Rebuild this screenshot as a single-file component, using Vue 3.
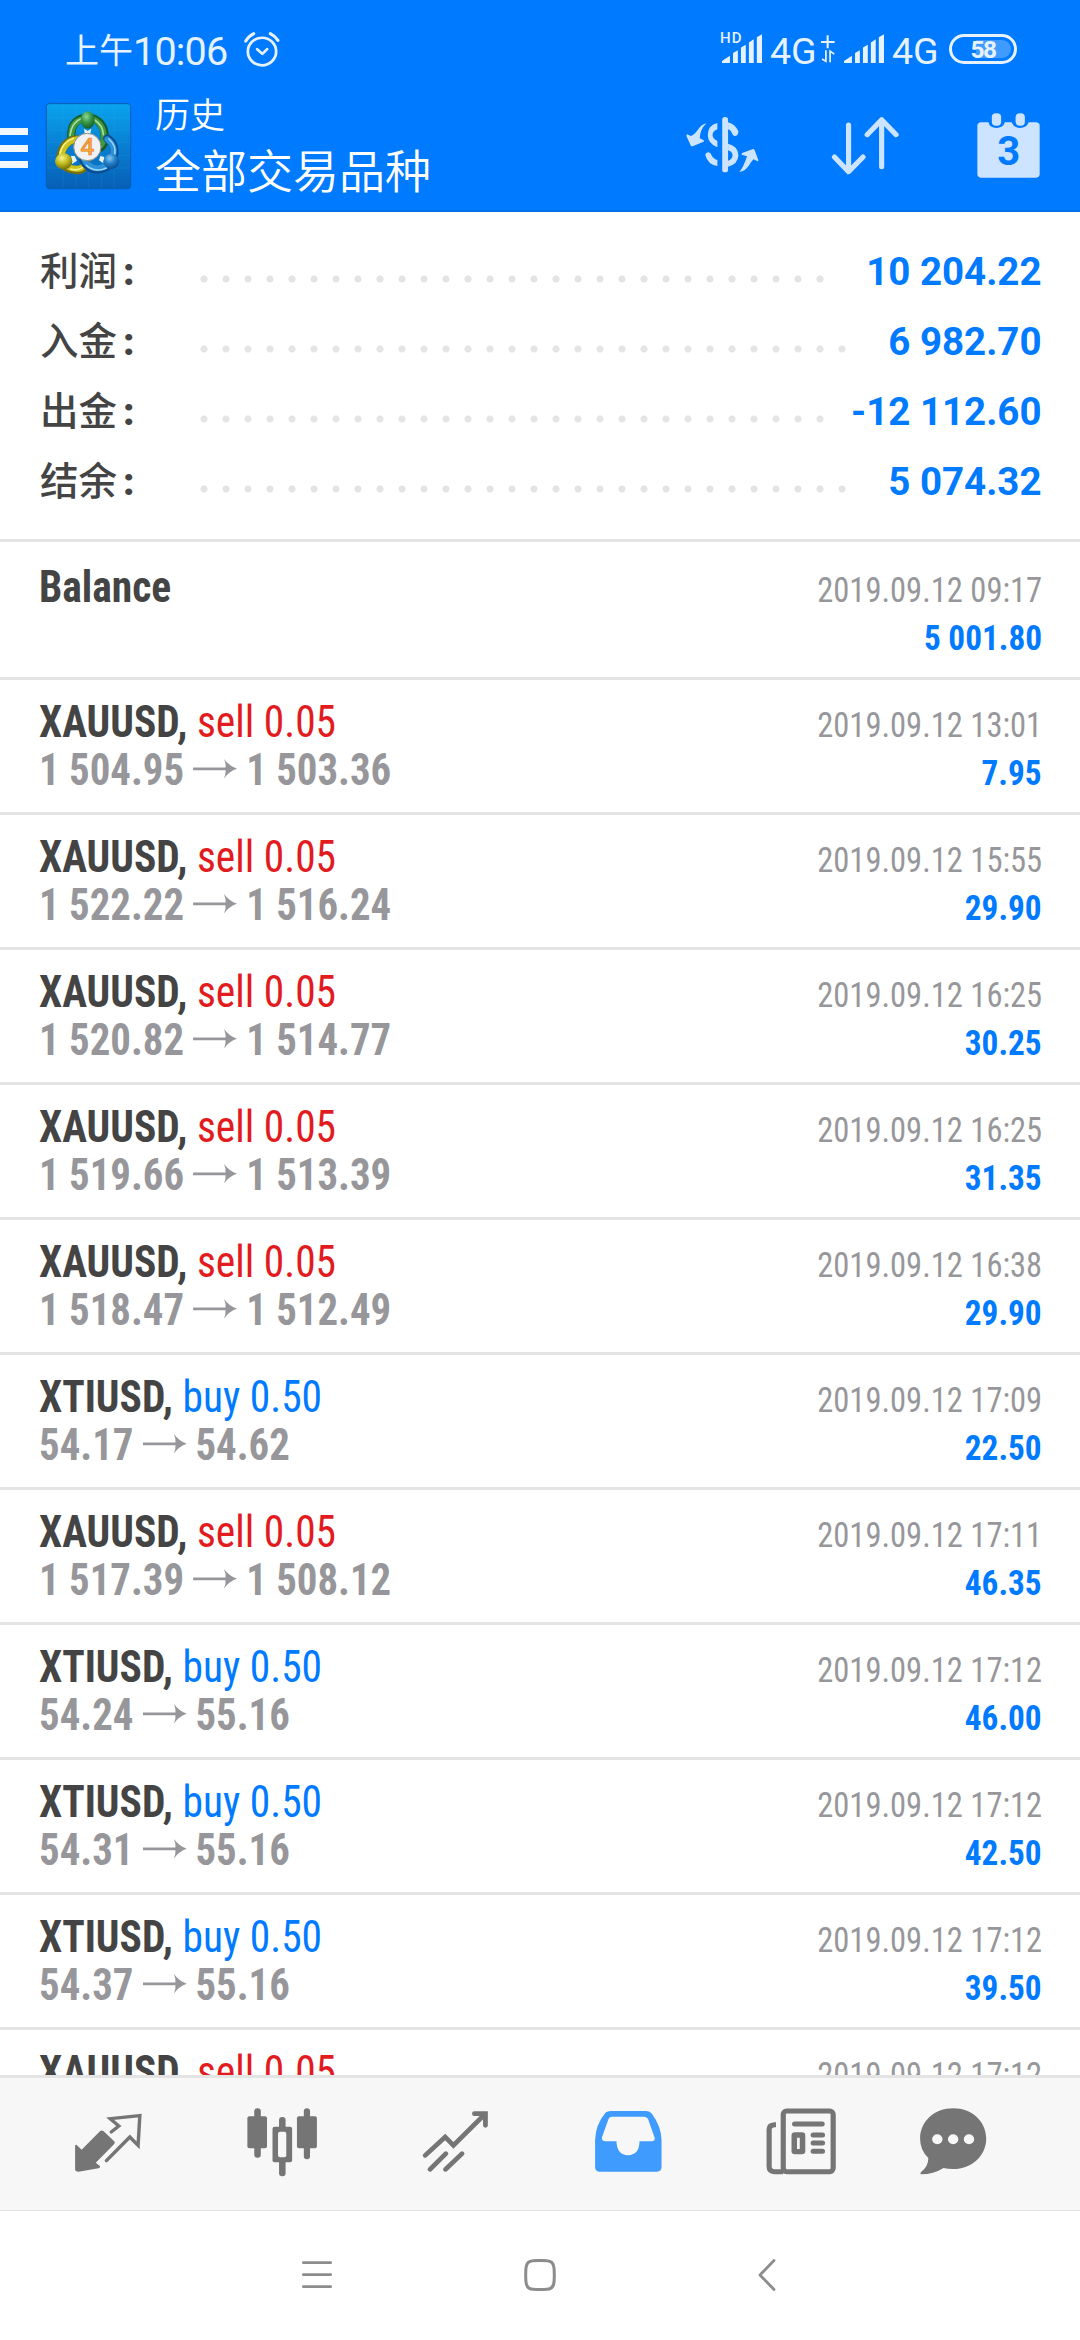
<script setup>
const summary = [
  { label: '利润', value: '10 204.22', dots: 29 },
  { label: '入金', value: '6 982.70', dots: 30 },
  { label: '出金', value: '-12 112.60', dots: 29 },
  { label: '结余', value: '5 074.32', dots: 30 },
]
const deals = [
  { symbol: 'Balance', time: '2019.09.12 09:17', profit: '5 001.80' },
  { symbol: 'XAUUSD,', side: 'sell', volume: '0.05', open: '1 504.95', close: '1 503.36', time: '2019.09.12 13:01', profit: '7.95' },
  { symbol: 'XAUUSD,', side: 'sell', volume: '0.05', open: '1 522.22', close: '1 516.24', time: '2019.09.12 15:55', profit: '29.90' },
  { symbol: 'XAUUSD,', side: 'sell', volume: '0.05', open: '1 520.82', close: '1 514.77', time: '2019.09.12 16:25', profit: '30.25' },
  { symbol: 'XAUUSD,', side: 'sell', volume: '0.05', open: '1 519.66', close: '1 513.39', time: '2019.09.12 16:25', profit: '31.35' },
  { symbol: 'XAUUSD,', side: 'sell', volume: '0.05', open: '1 518.47', close: '1 512.49', time: '2019.09.12 16:38', profit: '29.90' },
  { symbol: 'XTIUSD,', side: 'buy', volume: '0.50', open: '54.17', close: '54.62', time: '2019.09.12 17:09', profit: '22.50' },
  { symbol: 'XAUUSD,', side: 'sell', volume: '0.05', open: '1 517.39', close: '1 508.12', time: '2019.09.12 17:11', profit: '46.35' },
  { symbol: 'XTIUSD,', side: 'buy', volume: '0.50', open: '54.24', close: '55.16', time: '2019.09.12 17:12', profit: '46.00' },
  { symbol: 'XTIUSD,', side: 'buy', volume: '0.50', open: '54.31', close: '55.16', time: '2019.09.12 17:12', profit: '42.50' },
  { symbol: 'XTIUSD,', side: 'buy', volume: '0.50', open: '54.37', close: '55.16', time: '2019.09.12 17:12', profit: '39.50' },
  { symbol: 'XAUUSD,', side: 'sell', volume: '0.05', time: '2019.09.12 17:12' },
]
</script>

<template>
  <div class="screen">
    <header class="top">
      <div class="status">
        <div class="clock"><span class="ampm">上午</span><span class="time">10:06</span>
          <svg class="alarm" viewBox="705 95 110 110" preserveAspectRatio="none" fill="none" stroke="#e6f2ff">
            <circle cx="760" cy="156" r="41" stroke-width="8" />
            <path d="M746 149L761 163L775 149" stroke-width="8" stroke-linecap="round" stroke-linejoin="round" />
            <path d="M713 125Q722 110 736 103M784 103Q798 110 806 123" stroke-width="9" stroke-linecap="round" />
          </svg>
        </div>
        <div class="signals">
          <div class="signal">
            <span class="hd">HD</span>
            <svg class="bars" viewBox="523 95 116 100" preserveAspectRatio="none" fill="#e6f2ff">
              <path d="M523 189V183L546 167V189ZM555 189V159L569 150V189ZM578 189V142L592 134V189ZM601 189V127L615 117V189ZM624 189V111L639 102V189Z" />
            </svg>
          </div>
          <span class="net">4G</span>
          <svg class="plus" viewBox="812 95 40 100" preserveAspectRatio="none" fill="none" stroke="#e6f2ff" stroke-width="6">
            <path d="M831 105V144M812 125H851" />
            <path d="M826 150V184L815 177M838 187V153L850 162" stroke-width="5" />
          </svg>
          <svg class="bars second" viewBox="523 95 116 100" preserveAspectRatio="none" fill="#e6f2ff">
            <path d="M523 189V183L546 167V189ZM555 189V159L569 150V189ZM578 189V142L592 134V189ZM601 189V127L615 117V189ZM624 189V111L639 102V189Z" />
          </svg>
          <span class="net">4G</span>
          <div class="battery"><span>58</span></div>
        </div>
      </div>
      <div class="toolbar">
        <div class="burger"><i></i><i></i><i></i></div>
        <svg class="logo" viewBox="0 0 300 285">
          <defs>
            <linearGradient id="sky" x1="0" y1="0" x2="0" y2="1"><stop offset="0" stop-color="#0aa3ee" /><stop offset=".5" stop-color="#087fd2" /><stop offset="1" stop-color="#075fb5" /></linearGradient>
            <radialGradient id="grn" cx=".4" cy=".3" r=".7"><stop offset="0" stop-color="#8ed69a" /><stop offset=".5" stop-color="#389a48" /><stop offset="1" stop-color="#145f2d" /></radialGradient>
            <radialGradient id="yel" cx=".4" cy=".3" r=".7"><stop offset="0" stop-color="#f7f38a" /><stop offset=".5" stop-color="#c3bd20" /><stop offset="1" stop-color="#77720c" /></radialGradient>
            <radialGradient id="blu" cx=".4" cy=".3" r=".7"><stop offset="0" stop-color="#85c9f2" /><stop offset=".5" stop-color="#227fc8" /><stop offset="1" stop-color="#0b4f91" /></radialGradient>
          </defs>
          <rect x="19" y="17" width="253" height="255" rx="9" fill="url(#sky)" stroke="#0b5cb3" stroke-width="3" />
          <path d="M69 19V270M108 19V270M146 19V270M184 19V270M222 19V270M21 58H270M21 96H270M21 134H270M21 172H270M21 210H270" stroke="#4ab8f0" stroke-opacity=".18" stroke-width="2" />
          <g fill="none" stroke-linecap="round">
            <path d="M94 122C90 72 118 60 143 59C174 60 196 84 194 122C193 138 184 148 174 152" stroke="#175b29" stroke-width="25" />
            <path d="M94 120C91 74 119 63 143 61C173 62 193 86 191 122C190 134 183 142 175 147" stroke="#3d9942" stroke-width="18" />
            <path d="M90 112C94 80 110 66 128 60M164 66C180 76 189 90 190 110" stroke="#a8dda3" stroke-width="5" />
            <path d="M112 124C82 124 62 150 62 178C64 206 92 219 116 216C130 214 139 203 140 190" stroke="#766f10" stroke-width="25" />
            <path d="M112 124C84 126 65 150 65 178C67 202 92 215 116 212C128 210 136 201 137 190" stroke="#cbc31e" stroke-width="18" />
            <path d="M100 121C76 130 63 147 59 170M92 213C104 217 118 215 127 209" stroke="#f5ef86" stroke-width="5" />
            <path d="M202 122C222 134 229 158 218 184C204 216 168 222 146 206C136 199 132 191 129 183" stroke="#0b4d92" stroke-width="25" />
            <path d="M202 124C220 137 226 158 215 184C202 211 168 218 148 202C139 196 135 190 132 183" stroke="#2b91d8" stroke-width="18" />
            <path d="M207 123C222 137 228 152 224 169M139 202C158 219 183 219 199 210" stroke="#95d5fa" stroke-width="5" />
          </g>
          <path d="M132 92L143 99L154 92L150 110H135ZM93 174L104 174L111 188L96 198ZM181 174L193 177L190 196L177 187Z" fill="#e9f3f0" />
          <ellipse cx="143" cy="66" rx="21" ry="26" fill="url(#grn)" />
          <ellipse cx="71" cy="190" rx="26" ry="24" fill="url(#yel)" />
          <ellipse cx="214" cy="190" rx="24" ry="23" fill="url(#blu)" />
          <circle cx="142" cy="147" r="41" fill="#f1f1f3" stroke="#8a8f86" stroke-width="3" />
          <text x="142" y="171" text-anchor="middle" font-family="'Open Sans', sans-serif" font-weight="600" font-size="70" fill="#ffa537" stroke="#d98238" stroke-width="2">4</text>
        </svg>
        <div class="titles">
          <div class="sub">历史</div>
          <div class="title">全部交易品种</div>
        </div>
        <div class="actions">
          <svg class="act money" viewBox="420 335 220 200" preserveAspectRatio="none" fill="#cce4ff">
            <rect x="528" y="350" width="17" height="166" rx="8" />
            <path d="M514 368V387Q500 391 500 405Q501 416 514 422V441Q486 429 486 403Q487 374 514 368ZM545 366Q565 371 575 393Q575 407 564 407Q561 407 557 400Q552 388 545 387ZM479 464Q480 456 488 456Q496 457 497 465Q501 475 514 479V497Q486 493 479 464ZM545 430Q575 438 575 465Q574 492 545 499V481Q558 477 558 465Q557 453 545 450Z" />
            <path d="M482 369Q465 374 457 389Q446 404 437 407L426 402Q423 404 425 409L437 436Q439 439 444 437L474 424Q477 421 473 419L463 414Q463 388 482 369Z" />
            <path d="M578 515Q590 500 600 468L585 463Q582 461 586 458L617 446Q620 445 622 449L633 480Q632 484 629 482L619 477Q612 484 605 496Q595 512 578 515Z" />
          </svg>
          <svg class="act sort" viewBox="845 335 200 200" preserveAspectRatio="none" fill="none" stroke="#cce4ff" stroke-width="15" stroke-linecap="round" stroke-linejoin="round">
            <path d="M896 374V511M855 470L896 514L938 470M992 499V362M950 403L992 358L1034 403" />
          </svg>
          <div class="act calendar">
            <svg viewBox="1265 335 190 200" preserveAspectRatio="none" fill="#cce4ff">
              <path d="M1278 366H1301Q1305 383 1324 383Q1344 383 1349 366H1369Q1374 383 1393 383Q1412 383 1418 366H1441Q1450 368 1450 376V522Q1449 532 1440 532H1279Q1269 531 1269 521V376Q1269 368 1278 366Z" />
              <rect x="1311" y="339" width="27" height="37" rx="12" /><rect x="1380" y="339" width="27" height="37" rx="12" />
            </svg>
            <span>3</span>
          </div>
        </div>
      </div>
    </header>

    <section class="summary">
      <div v-for="s in summary" :key="s.label" class="sum-row">
        <div class="label">{{ s.label }}<b>:</b></div>
        <div class="dots" :style="{ width: s.dots * 22 + 'px' }"></div>
        <div class="amount">{{ s.value }}</div>
      </div>
    </section>

    <main class="list">
      <article v-for="(d, i) in deals" :key="i" class="deal" :class="{ first: i === 0 }">
        <div class="line">
          <div class="name"><span class="sym">{{ d.symbol }}</span><span v-if="d.side" class="side" :class="d.side">&nbsp;{{ d.side }} {{ d.volume }}</span></div>
          <div class="date">{{ d.time }}</div>
        </div>
        <div v-if="d.profit" class="line">
          <div class="prices">
            <template v-if="d.open">
              <span>{{ d.open }}</span>
              <svg class="arrow" viewBox="0 0 44 20" preserveAspectRatio="none" fill="#97979b"><path d="M0 8.600H32.500Q33 5 31 0Q36 7 44 9.800Q36 12.500 31 19.500Q33 14.500 32.500 11.200H0Z" /></svg>
              <span>{{ d.close }}</span>
            </template>
          </div>
          <div class="profit">{{ d.profit }}</div>
        </div>
      </article>
    </main>

    <nav class="tabs">
      <div class="tab">
        <svg viewBox="210 260 210 210" preserveAspectRatio="none" fill="#757575">
          <path d="M219 376Q221 371 226 376L238 388L291 333Q297 328 302 333L334 364Q335 368 332 372L279 427L291 437Q293 442 287 444L229 454Q219 454 219 447Z" />
          <path d="M324 335L346 317L321 295L407 286L402 375L378 350L310 421" fill="none" stroke="#757575" stroke-width="10" stroke-linecap="round" />
        </svg>
      </div>
      <div class="tab">
        <svg viewBox="711 260 210 210" preserveAspectRatio="none" fill="#757575">
          <rect x="715" y="288" width="57" height="96" rx="6" /><rect x="735" y="264" width="19" height="148" rx="9" />
          <rect x="859" y="288" width="58" height="96" rx="6" /><rect x="879" y="264" width="18" height="153" rx="9" />
          <rect x="807" y="290" width="19" height="178" rx="9" /><rect x="788" y="319" width="57" height="107" rx="6" />
          <rect x="804" y="334" width="24" height="77" rx="6" fill="#f7f7f7" />
        </svg>
      </div>
      <div class="tab">
        <svg viewBox="1213 260 210 210" preserveAspectRatio="none" fill="none" stroke="#757575" stroke-width="14" stroke-linecap="round">
          <path d="M1231 405L1289 350L1313 375L1403 283M1374 280H1406V315M1245 447L1291 400M1290 447L1338 400" />
        </svg>
      </div>
      <div class="tab">
        <svg viewBox="149 260 210 210" preserveAspectRatio="none" fill="#409bff">
          <path fill-rule="evenodd" d="M204 272H307Q318 272 323 280Q350 318 351 358V441Q350 454 338 454H170Q158 453 158 441V358Q160 312 186 280Q191 272 204 272ZM207 289Q200 289 197 296L178 351Q176 362 188 363H220Q221 404 254 405Q287 403 287 363H322Q333 362 331 352L312 297Q309 289 299 289Z" />
        </svg>
      </div>
      <div class="tab">
        <svg viewBox="653 260 210 210" preserveAspectRatio="none" fill="none" stroke="#757575" stroke-width="15">
          <rect x="706" y="272" width="145" height="182" rx="10" />
          <path d="M685 313H680Q665 314 665 327V438Q665 454 680 454H706" />
          <path d="M739 311H819M793 344H820M793 368H820M793 393H820" stroke-linecap="round" />
          <rect x="738" y="344" width="24" height="50" rx="2" stroke-width="16" />
        </svg>
      </div>
      <div class="tab last">
        <svg viewBox="1094 260 210 210" preserveAspectRatio="none" fill="#757575">
          <path d="M1199 264C1254 264 1295 304 1295 355C1295 406 1253 446 1199 446Q1184 446 1171 443Q1142 462 1106 462Q1101 459 1106 455Q1127 438 1127 413Q1103 389 1103 355C1103 304 1144 264 1199 264Z" />
          <g fill="#f7f7f7"><circle cx="1153" cy="357" r="15" /><circle cx="1199" cy="357" r="15" /><circle cx="1245" cy="357" r="15" /></g>
        </svg>
      </div>
    </nav>

    <footer class="sysnav">
      <svg class="k-menu" viewBox="0 0 30 32" fill="none" stroke="#8c8c8c" stroke-width="2.8" stroke-linecap="round"><path d="M1.4 3.7H28.6M1.4 15.7H28.6M1.4 27.7H28.6" /></svg>
      <svg class="k-home" viewBox="0 0 32 32" fill="none" stroke="#8c8c8c" stroke-width="3"><path d="M9 1.7Q16 1.2 23 1.7Q29.5 2 30 9Q30.6 16 30 23Q29.5 30 23 30.3Q16 30.8 9 30.3Q2.5 30 2 23Q1.4 16 2 9Q2.5 2 9 1.7Z" /></svg>
      <svg class="k-back" viewBox="0 0 18 32" fill="none" stroke="#8c8c8c" stroke-width="2.8" stroke-linecap="round" stroke-linejoin="round"><path d="M16 1.5L2 16L16 30.5" /></svg>
    </footer>
  </div>
</template>

<style>
body {
  background: #fff;
}
</style>

<style scoped>
.screen {
  width: 1080px;
  height: 2340px;
  display: flex;
  flex-direction: column;
  overflow: hidden;
  background: #fff;
  font-family: Roboto, 'Noto Sans CJK SC', sans-serif;
}
svg {
  display: block;
  flex: none;
}
.top {
  flex: none;
  box-sizing: border-box;
  height: 212px;
  background: #007aff;
  border-bottom: 2px solid #0070e6;
}
.status {
  height: 98px;
  display: flex;
  justify-content: space-between;
  color: #e6f2ff;
}
.clock {
  display: flex;
  align-items: flex-start;
  padding: 31px 0 0 65px;
}
.ampm {
  margin-top: -2px;
  font: 400 34px/40px 'Noto Sans CJK SC', sans-serif;
}
.time {
  width: 94px;
  margin-top: -1px;
  font-size: 39.5px;
  line-height: 44px;
  font-weight: 400;
  letter-spacing: -0.8px;
}
.alarm {
  width: 38px;
  height: 37px;
  margin-left: 16px;
}
.signals {
  display: flex;
  align-items: flex-start;
  padding: 32px 63px 0 0;
}
.signal {
  position: relative;
}
.hd {
  position: absolute;
  left: -2px;
  top: -1px;
  font-size: 15px;
  line-height: 15px;
  font-weight: 500;
  letter-spacing: 1px;
}
.bars {
  width: 40px;
  height: 33px;
}
.net {
  width: 51px;
  margin-left: 8px;
  font-size: 37.5px;
  line-height: 38px;
  font-weight: 400;
}
.plus {
  width: 14px;
  height: 33px;
}
.second {
  margin-left: 9px;
}
.battery {
  box-sizing: border-box;
  width: 68px;
  height: 30px;
  margin: 2px 0 0 6px;
  padding: 3px;
  border: 3px solid #e6f2ff;
  border-radius: 15px;
}
.battery span {
  display: block;
  height: 18px;
  border-radius: 9px;
  background: linear-gradient(90deg, #007aff 38%, #409bff 38%);
  font-size: 24.5px;
  line-height: 19px;
  font-weight: 700;
  text-align: center;
  letter-spacing: -1.5px;
}
.toolbar {
  height: 112px;
  display: flex;
  align-items: flex-start;
}
.burger {
  width: 28px;
  height: 40px;
  margin-top: 30px;
  display: flex;
  flex-direction: column;
  justify-content: space-between;
}
.burger i {
  height: 7px;
  background: #f0f7ff;
}
.logo {
  width: 100px;
  height: 95px;
  margin-left: 12px;
}
.titles {
  width: 300px;
  margin-left: 15px;
  color: #fff;
  font-family: 'Noto Sans CJK SC', sans-serif;
  font-weight: 350;
}
.sub {
  margin-top: -6px;
  font-size: 35px;
  line-height: 42px;
}
.title {
  font-size: 46px;
  line-height: 56px;
  margin-top: 6px;
}
.actions {
  flex: 1;
  display: flex;
  justify-content: flex-end;
  padding: 14px 38.5px 0 0;
}
.act {
  height: 66.7px;
}
.money {
  width: 75.8px;
}
.sort {
  width: 68.9px;
  margin-left: 70.6px;
}
.calendar {
  position: relative;
  width: 65.4px;
  margin-left: 75.8px;
}
.calendar svg {
  width: 100%;
  height: 100%;
}
.calendar span {
  position: absolute;
  left: 0;
  right: 0;
  top: 20px;
  text-align: center;
  font-size: 40px;
  line-height: 40px;
  font-weight: 700;
  color: #007aff;
}
.summary {
  flex: none;
  box-sizing: border-box;
  height: 330px;
  padding: 25px 38.5px 0 40px;
  border-bottom: 3px solid #e4e4e4;
}
.sum-row {
  height: 70px;
  display: flex;
  align-items: flex-start;
}
.label {
  width: 152.5px;
  margin-top: -4px;
  font: 500 38.5px/70px 'Noto Sans CJK SC', sans-serif;
  color: #444;
}
.label b {
  margin-left: 6px;
  font-family: Roboto, sans-serif;
  font-weight: 900;
}
.dots {
  height: 8px;
  margin-top: 37.5px;
  background: radial-gradient(circle at center, #e4e4e4 3.2px, transparent 3.9px) 0 0 / 22px 8px repeat-x;
}
.amount {
  flex: 1;
  text-align: right;
  font-size: 38.5px;
  line-height: 70px;
  font-weight: 700;
  color: #007aff;
  white-space: nowrap;
}
.list {
  flex: none;
  height: 1533px;
  overflow: hidden;
}
.deal {
  box-sizing: border-box;
  height: 135px;
  padding: 18px 38px 0 39px;
  border-bottom: 3px solid #e4e4e4;
  font-family: 'Roboto Condensed', Roboto, sans-serif;
  font-stretch: 75%;
}
.deal.first {
  height: 138px;
  padding-top: 21px;
}
.line {
  height: 48px;
  display: flex;
  justify-content: space-between;
  align-items: baseline;
  line-height: 48px;
  white-space: pre;
}
.name {
  font-size: 44px;
  transform: scaleX(0.942);
  transform-origin: left center;
}
.sym {
  font-weight: 700;
  color: #444;
}
.sell {
  color: #e21b1e;
}
.buy {
  color: #007aff;
}
.prices {
  display: flex;
  align-items: baseline;
  font-size: 44px;
  font-weight: 700;
  color: #97979b;
  transform: scaleX(0.928);
  transform-origin: left center;
}
.prices::before {
  content: '\200b';
  width: 0;
}
.arrow {
  width: 47.4px;
  height: 20px;
  margin: 0 9.5px 0 10px;
  transform: translateY(-6px);
}
.date,
.profit {
  font-size: 35.75px;
  transform-origin: right center;
}
.date {
  color: #97979b;
  transform: scaleX(0.91);
}
.profit {
  font-weight: 700;
  color: #007aff;
  transform: scaleX(0.93);
}
.tabs {
  flex: none;
  box-sizing: border-box;
  height: 136px;
  display: flex;
  padding: 28.7px 0 0 22px;
  background: #f7f7f7;
  border-top: 3px solid #e4e4e4;
  border-bottom: 1px solid #e0e0e0;
}
.tab {
  width: 173.2px;
  display: flex;
  justify-content: center;
}
.tab.last {
  width: 130px;
}
.tab svg {
  width: 72.3px;
  height: 70px;
}
.sysnav {
  flex: 1;
  display: flex;
  align-items: flex-start;
  padding: 48px 0 0 302px;
}
.k-menu {
  width: 30px;
  height: 32px;
}
.k-home {
  width: 32px;
  height: 32px;
  margin-left: 192px;
}
.k-back {
  width: 18px;
  height: 32px;
  margin-left: 202px;
}
</style>
